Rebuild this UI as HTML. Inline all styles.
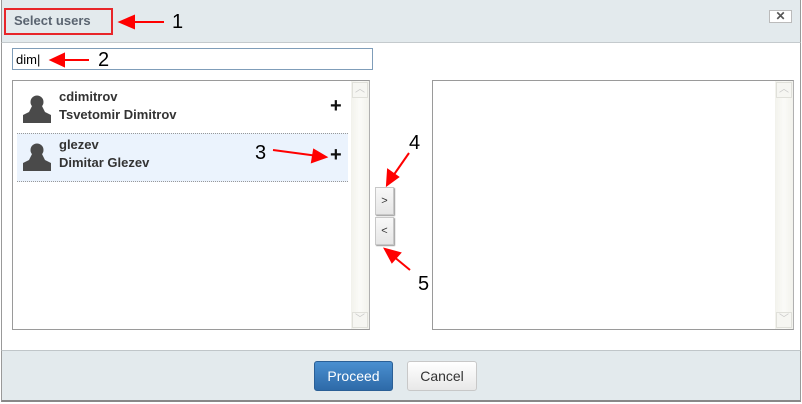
<!DOCTYPE html>
<html><head><style>
*{box-sizing:border-box;margin:0;padding:0}
body{width:802px;height:404px;background:#fff;position:relative;overflow:hidden;font-family:"Liberation Sans",Arial,sans-serif}
.a{position:absolute}
.hdr{left:1px;top:0;width:800px;height:43px;background:#e3eaed;border-bottom:1px solid #c4cacd;border-left:1px solid #999;border-right:1px solid #999}
.ftr{left:1px;top:350px;width:800px;height:52px;background:#e3eaed;border-top:1px solid #c0c6c9;border-bottom:2px solid #888;border-left:1px solid #999;border-right:1px solid #999}
.body{left:1px;top:43px;width:800px;height:307px;border-left:1px solid #999;border-right:1px solid #999}
.list{background:#fff;border:1px solid #9a9a9a;border-right-color:#b0b0b0}
.sb{top:0;right:0;width:18px;height:100%;background:linear-gradient(to right,#f2f2ec,#fbfbf8,#f2f2ec)}
.sbb{width:16px;height:16px;left:1px;border:1px solid #e0e0da;background:#f6f6f2;color:#c8c8c8;font-size:10px;text-align:center;line-height:14px}
.name{font-size:13px;font-weight:bold;color:#333;line-height:18px}
.plus{font-size:20px;font-weight:bold;color:#111}
.arr{stroke:#f00;stroke-width:2;fill:#f00}
.num{font-size:20px;color:#000}
.mb{left:375px;width:19px;height:28px;background:linear-gradient(#f8f8f8,#e6e6e6);border:1px solid #c8c8c8;box-shadow:1px 1px 1px #999;font-size:11px;text-align:center;line-height:26px;color:#333}
</style></head><body>
<div class="a hdr"></div>
<div class="a body"></div>
<div class="a ftr"></div>
<div class="a" style="left:4px;top:8px;width:109px;height:27px;border:2px solid #e8262a"></div>
<div class="a" style="left:14px;top:13px;font-size:13px;font-weight:bold;color:#5a6470">Select users</div>
<div class="a" style="left:769px;top:10px;width:23px;height:13px;background:#fff;border:1px solid #bbb;text-align:center;font-size:12px;font-weight:bold;color:#555;line-height:11px">✕</div>

<div class="a" style="left:12px;top:48px;width:361px;height:22px;border:1px solid #7f9db9;background:#fff;font-size:13px;padding:3px 0 0 3px;color:#000">dim|</div>

<div class="a list" style="left:12px;top:80px;width:358px;height:250px">
  <div class="a sb"><div class="a sbb" style="top:1px">︿</div><div class="a sbb" style="bottom:1px">﹀</div></div>
  <div class="a" style="left:4px;top:52px;width:331px;height:49px;background:#ebf3fd;border-top:1px dotted #999;border-bottom:1px dotted #999"></div>
</div>
<svg class="a" style="left:23px;top:94px" width="30" height="30"><circle cx="14" cy="8" r="6.5" fill="#4a4a4a"/><path d="M9 12 L19 12 L22 18 L28 21 L28 29 L0 29 L0 21 L6 18 Z" fill="#4a4a4a"/></svg>
<svg class="a" style="left:23px;top:142px" width="30" height="30"><circle cx="14" cy="8" r="6.5" fill="#4a4a4a"/><path d="M9 12 L19 12 L22 18 L28 21 L28 29 L0 29 L0 21 L6 18 Z" fill="#4a4a4a"/></svg>
<div class="a name" style="left:59px;top:88px">cdimitrov<br>Tsvetomir Dimitrov</div>
<div class="a name" style="left:59px;top:136px">glezev<br>Dimitar Glezev</div>
<div class="a plus" style="left:330px;top:95px">+</div>
<div class="a plus" style="left:330px;top:144px">+</div>

<div class="a list" style="left:432px;top:80px;width:362px;height:250px">
  <div class="a sb"><div class="a sbb" style="top:1px">︿</div><div class="a sbb" style="bottom:1px">﹀</div></div>
</div>

<div class="a mb" style="top:187px">&gt;</div>
<div class="a mb" style="top:217px">&lt;</div>

<div class="a" style="left:314px;top:361px;width:79px;height:30px;border-radius:3px;background:linear-gradient(#4a8fd0,#2e6aa8);border:1px solid #2a5f96;color:#fff;font-size:14px;text-align:center;line-height:28px">Proceed</div>
<div class="a" style="left:407px;top:361px;width:70px;height:30px;border-radius:3px;background:linear-gradient(#fff,#e8e8e8);border:1px solid #c8c8c8;color:#333;font-size:14px;text-align:center;line-height:28px">Cancel</div>

<svg class="a" style="left:0;top:0" width="802" height="404">
<g class="arr">
<line x1="164" y1="22" x2="128" y2="22"/><polygon points="120,22 134,16 134,28"/>
<line x1="89" y1="60" x2="60" y2="60"/><polygon points="51,60 64,54 64,66"/>
<line x1="273" y1="150" x2="318" y2="156"/><polygon points="326,157 312,162 314,150"/>
<line x1="409" y1="153" x2="393" y2="176"/><polygon points="387,185 388,170 398,177"/>
<line x1="410" y1="270" x2="393" y2="256"/><polygon points="385,249 400,253 392,262"/>
</g>
<text x="172" y="28" class="num" font-family="Liberation Sans">1</text>
<text x="98" y="66" class="num" font-family="Liberation Sans">2</text>
<text x="255" y="159" class="num" font-family="Liberation Sans">3</text>
<text x="409" y="149" class="num" font-family="Liberation Sans">4</text>
<text x="418" y="290" class="num" font-family="Liberation Sans">5</text>
</svg>
</body></html>
